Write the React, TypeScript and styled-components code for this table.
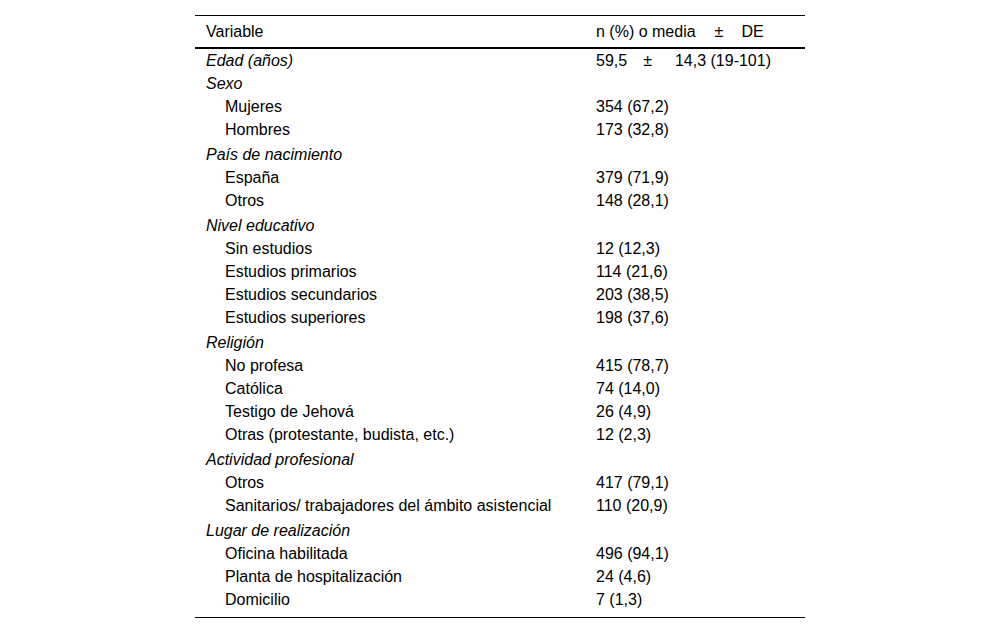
import React from "react";
import styled, { createGlobalStyle } from "styled-components";

const Global = createGlobalStyle`
  html, body { margin: 0; padding: 0; background: #fff; }
  body { font-family: "Liberation Sans", Arial, sans-serif; color: #000; }
`;

const Page = styled.div`
  display: flex;
  justify-content: center;
  padding-top: 15px;
`;

const Table = styled.table`
  width: 610px;
  table-layout: fixed;
  border-collapse: collapse;
  font-size: 16px;
  line-height: 23px;
  border-top: 1px solid #000;
  border-bottom: 1px solid #000;
`;

const Col = styled.col<{ $w: number }>`
  width: ${(p) => p.$w}px;
`;

const HeadCell = styled.th`
  text-align: left;
  font-weight: normal;
  white-space: nowrap;
  height: 31px;
  padding: 0 0 0 11px;
  border-bottom: 2px solid #000;
  vertical-align: middle;
  &:last-child { padding-left: 0; }
`;

const Row = styled.tr<{ $groupEnd?: boolean }>`
  & > td { padding-bottom: ${(p) => (p.$groupEnd ? "2px" : "0")}; }
  &:last-child > td { padding-bottom: 6px; }
`;

const Label = styled.td<{ $kind: "group" | "item" }>`
  padding: 0 0 0 ${(p) => (p.$kind === "item" ? "30px" : "11px")};
  font-style: ${(p) => (p.$kind === "group" ? "italic" : "normal")};
  white-space: nowrap;
`;

const Value = styled.td`
  padding: 0;
  white-space: nowrap;
`;

const PlusMinus = styled.span<{ $before: number; $after: number }>`
  display: inline-block;
  margin: 0 ${(p) => p.$after}px 0 ${(p) => p.$before}px;
`;

type R = { label: string; value?: React.ReactNode; kind: "group" | "item"; end?: boolean };

const rows: R[] = [
  {
    label: "Edad (años)",
    value: (
      <>
        59,5<PlusMinus $before={16} $after={23}>±</PlusMinus>14,3 (19-101)
      </>
    ),
    kind: "group",
  },
  { label: "Sexo", kind: "group" },
  { label: "Mujeres", value: "354 (67,2)", kind: "item" },
  { label: "Hombres", value: "173 (32,8)", kind: "item", end: true },
  { label: "País de nacimiento", kind: "group" },
  { label: "España", value: "379 (71,9)", kind: "item" },
  { label: "Otros", value: "148 (28,1)", kind: "item", end: true },
  { label: "Nivel educativo", kind: "group" },
  { label: "Sin estudios", value: "12 (12,3)", kind: "item" },
  { label: "Estudios primarios", value: "114 (21,6)", kind: "item" },
  { label: "Estudios secundarios", value: "203 (38,5)", kind: "item" },
  { label: "Estudios superiores", value: "198 (37,6)", kind: "item", end: true },
  { label: "Religión", kind: "group" },
  { label: "No profesa", value: "415 (78,7)", kind: "item" },
  { label: "Católica", value: "74 (14,0)", kind: "item" },
  { label: "Testigo de Jehová", value: "26 (4,9)", kind: "item" },
  { label: "Otras (protestante, budista, etc.)", value: "12 (2,3)", kind: "item", end: true },
  { label: "Actividad profesional", kind: "group" },
  { label: "Otros", value: "417 (79,1)", kind: "item" },
  { label: "Sanitarios/ trabajadores del ámbito asistencial", value: "110 (20,9)", kind: "item", end: true },
  { label: "Lugar de realización", kind: "group" },
  { label: "Oficina habilitada", value: "496 (94,1)", kind: "item" },
  { label: "Planta de hospitalización", value: "24 (4,6)", kind: "item" },
  { label: "Domicilio", value: "7 (1,3)", kind: "item" },
];

export default function App() {
  return (
    <>
      <Global />
      <Page>
        <Table>
          <colgroup>
            <Col $w={401} />
            <Col $w={209} />
          </colgroup>
          <thead>
            <tr>
              <HeadCell>Variable</HeadCell>
              <HeadCell>
                n (%) o media<PlusMinus $before={19} $after={18}>±</PlusMinus>DE
              </HeadCell>
            </tr>
          </thead>
          <tbody>
            {rows.map((r, i) => (
              <Row key={i} $groupEnd={r.end}>
                <Label $kind={r.kind}>{r.label}</Label>
                <Value>{r.value ?? ""}</Value>
              </Row>
            ))}
          </tbody>
        </Table>
      </Page>
    </>
  );
}
